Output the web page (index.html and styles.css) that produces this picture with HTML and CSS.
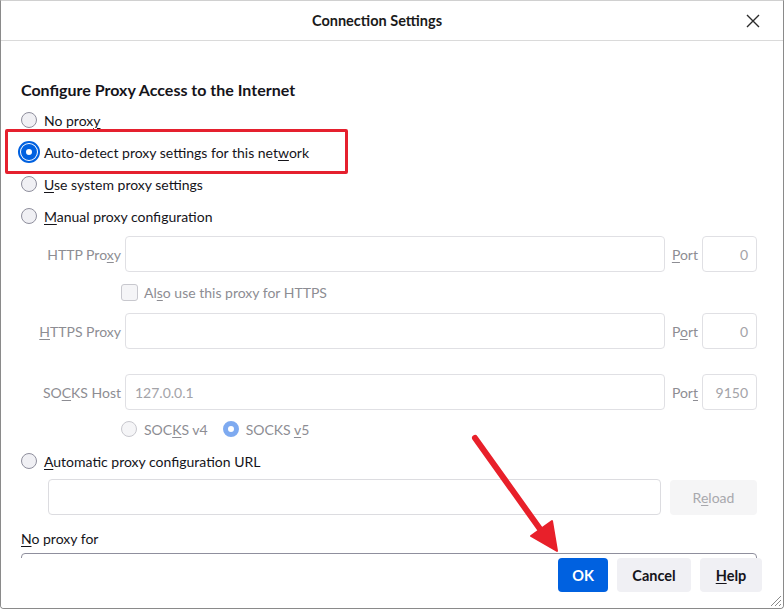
FILE: index.html
```html
<!DOCTYPE html>
<html>
<head>
<meta charset="utf-8">
<title>Connection Settings</title>
<link rel="stylesheet" href="styles.css">
</head>
<body>
<div class="window">
  <div class="titlebar">
    <div class="title">Connection Settings</div>
    <div class="close">
      <svg width="14" height="14" viewBox="0 0 14 14"><path d="M1 1 L13 13 M13 1 L1 13" stroke="#2b2b2b" stroke-width="1.4" fill="none"/></svg>
    </div>
  </div>
  <div class="content">
    <div class="heading">Configure Proxy Access to the Internet</div>
    <div class="radios">
      <div class="row"><span class="radio"></span><span>No prox<u>y</u></span></div>
      <div class="row"><span class="radio checked focus"></span><span>Auto-detect proxy settings for this net<u>w</u>ork</span></div>
      <div class="row"><span class="radio"></span><span><u>U</u>se system proxy settings</span></div>
      <div class="row"><span class="radio"></span><span><u>M</u>anual proxy configuration</span></div>
    </div>
    <div class="proxygrid">
      <div class="lbl">HTTP Pro<u>x</u>y</div>
      <div class="field"></div>
      <div class="plbl"><u>P</u>ort</div>
      <div class="field port">0</div>

      <div class="checkrow"><span class="checkbox"></span><span>Al<u>s</u>o use this proxy for HTTPS</span></div>

      <div class="lbl"><u>H</u>TTPS Proxy</div>
      <div class="field"></div>
      <div class="plbl">P<u>o</u>rt</div>
      <div class="field port">0</div>

      <div class="spacer"></div>

      <div class="lbl">SO<u>C</u>KS Host</div>
      <div class="field host">127.0.0.1</div>
      <div class="plbl">Por<u>t</u></div>
      <div class="field port">9150</div>

      <div class="versions">
        <div class="vitem"><span class="radio dis"></span><span>SOC<u>K</u>S v4</span></div>
        <div class="vitem"><span class="radio checked dis"></span><span>SOCKS <u>v</u>5</span></div>
      </div>
    </div>
    <div class="row autorow"><span class="radio"></span><span><u>A</u>utomatic proxy configuration URL</span></div>
    <div class="urlrow">
      <div class="field url"></div>
      <div class="reload"><span>R<u>e</u>load</span></div>
    </div>
    <div class="noproxy"><u>N</u>o proxy for</div>
    <div class="textarea"></div>
  </div>
  <div class="footer">
    <div class="btn primary">OK</div>
    <div class="btn cancel">Cancel</div>
    <div class="btn help"><span><u>H</u>elp</span></div>
  </div>
  <svg class="grip" width="14" height="14" viewBox="0 0 14 14">
    <path d="M13 3 L3 13 M13 7 L7 13 M13 11 L11 13" stroke="#8a8a8a" stroke-width="1" fill="none"/>
  </svg>
  <div class="highlight"></div>
  <svg class="arrow" width="784" height="609" viewBox="0 0 784 609">
    <line x1="475" y1="438" x2="540" y2="529" stroke="#e8202a" stroke-width="6" stroke-linecap="round"/>
    <polygon points="557,551 531,536 552,521" fill="#e8202a" stroke="#e8202a" stroke-width="2" stroke-linejoin="round"/>
  </svg>
</div>
</body>
</html>
```
FILE: styles.css
```css
html, body {
  margin: 0;
  padding: 0;
  background: #ffffff;
}
body {
  font-family: "Lato", "Noto Sans", sans-serif;
  font-size: 14px;
  color: #15141a;
}
u {
  text-decoration: underline;
  text-underline-offset: 2px;
  text-decoration-thickness: 1px;
}
.window {
  position: relative;
  width: 784px;
  height: 609px;
  box-sizing: border-box;
  border: 1px solid #8a8a8a;
  border-top-color: #d0d0d0;
  border-radius: 0 0 4px 4px;
  display: flex;
  flex-direction: column;
  overflow: hidden;
  background: #fff;
}
.titlebar {
  height: 39px;
  border-bottom: 1px solid #dadada;
  display: flex;
  align-items: center;
  flex: none;
}
.title {
  flex: 1;
  text-align: center;
  padding-left: 22px;
  font-size: 14.5px;
  font-weight: 700;
  color: #1a1a1a;
}
.close {
  width: 44px;
  height: 39px;
  display: flex;
  align-items: center;
  justify-content: center;
  margin-right: 8px;
}
.content {
  flex: 1;
  overflow: hidden;
  padding: 0 26px 0 20px;
}
.heading {
  margin-top: 39px;
  height: 20px;
  line-height: 20px;
  font-size: 16px;
  font-weight: 700;
}
.radios {
  margin-top: 4px;
}
.row {
  display: flex;
  align-items: center;
  height: 32px;
  gap: 7px;
}
.radio {
  width: 16px;
  height: 16px;
  box-sizing: border-box;
  border-radius: 50%;
  border: 1px solid #8f8f9d;
  background: #f0f0f4;
  flex: none;
}
.radio.checked {
  border: 5px solid #0061e0;
  background: #fff;
}
.radio.focus {
  outline: 2px solid #0061e0;
  outline-offset: 1px;
}
.radio.dis {
  border-color: #c8c8ce;
  background: #f5f5f7;
}
.radio.checked.dis {
  border: 5px solid #7eaaf0;
  background: #fff;
}
.proxygrid {
  display: grid;
  grid-template-columns: 100px 1fr auto 55px;
  column-gap: 4px;
  margin-top: 4px;
  color: #8d8d93;
}
.lbl {
  text-align: right;
  align-self: center;
  white-space: nowrap;
}
.plbl {
  align-self: center;
  padding-left: 3px;
}
.field {
  height: 36px;
  box-sizing: border-box;
  border: 1px solid #e0e0e4;
  border-radius: 4px;
  background: #fff;
  display: flex;
  align-items: center;
  color: #a3a3a8;
}
.field.port {
  justify-content: flex-end;
  padding-right: 8px;
}
.field.host {
  padding-left: 9px;
}
.checkrow {
  grid-column: 2 / 5;
  height: 41px;
  display: flex;
  align-items: center;
  margin-left: -4px;
  gap: 6px;
}
.checkbox {
  width: 17px;
  height: 17px;
  box-sizing: border-box;
  border: 1px solid #c8c8ce;
  border-radius: 3px;
  background: #f5f5f7;
}
.spacer {
  grid-column: 1 / 5;
  height: 25px;
}
.versions {
  grid-column: 2 / 5;
  margin-left: -4px;
  margin-top: 2px;
  height: 34px;
  display: flex;
  align-items: center;
  gap: 15px;
}
.vitem {
  display: flex;
  align-items: center;
  gap: 7px;
}
.autorow {
  height: 30px;
}
.urlrow {
  display: flex;
  margin-top: 3px;
  padding-left: 27px;
  gap: 9px;
  align-items: center;
}
.field.url {
  flex: 1;
  border-color: #dcdce0;
}
.reload {
  width: 87px;
  height: 35px;
  border-radius: 4px;
  background: #f5f5f6;
  color: #a8a8ad;
  display: flex;
  align-items: center;
  justify-content: center;
}
.noproxy {
  margin-top: 14px;
  line-height: 20px;
  height: 20px;
}
.textarea {
  margin-top: 4px;
  height: 60px;
  border: 1px solid #8f8f9d;
  border-radius: 4px;
}
.footer {
  flex: none;
  height: 50px;
  display: flex;
  justify-content: flex-end;
  gap: 9px;
  padding: 0 21px 0 0;
  box-sizing: border-box;
  background: #fff;
}
.btn {
  height: 34px;
  border-radius: 4px;
  background: #f0f0f4;
  color: #15141a;
  display: flex;
  align-items: center;
  justify-content: center;
  font-size: 14.5px;
  font-weight: 700;
}
.btn.primary {
  background: #0061e0;
  color: #fff;
  width: 50px;
}
.btn.cancel {
  width: 74px;
}
.btn.help {
  width: 62px;
}
.grip {
  position: absolute;
  right: 1px;
  bottom: 1px;
}
.highlight {
  position: absolute;
  left: 4px;
  top: 128px;
  width: 343px;
  height: 45px;
  box-sizing: border-box;
  border: 3px solid #e5202e;
  border-radius: 2px;
}
.arrow {
  position: absolute;
  left: -1px;
  top: -1px;
  pointer-events: none;
}
```
